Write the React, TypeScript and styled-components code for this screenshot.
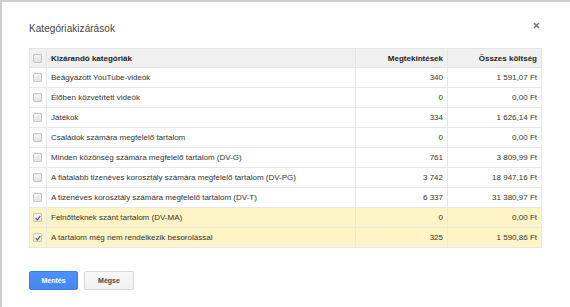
import React from 'react';
import styled, { createGlobalStyle } from 'styled-components';

const GlobalStyle = createGlobalStyle`
  html, body {
    margin: 0;
    padding: 0;
    background: #fff;
    overflow: hidden;
  }
  body {
    font-family: "Liberation Sans", Arial, sans-serif;
    color: #222;
  }
`;

type Row = { name: string; views: string; cost: string; checked?: boolean };

const rows: Row[] = [
  { name: 'Beágyazott YouTube-videók', views: '340', cost: '1 591,07 Ft' },
  { name: 'Élőben közvetített videók', views: '0', cost: '0,00 Ft' },
  { name: 'Játékok', views: '334', cost: '1 626,14 Ft' },
  { name: 'Családok számára megfelelő tartalom', views: '0', cost: '0,00 Ft' },
  { name: 'Minden közönség számára megfelelő tartalom (DV-G)', views: '761', cost: '3 809,99 Ft' },
  { name: 'A fiatalabb tizenéves korosztály számára megfelelő tartalom (DV-PG)', views: '3 742', cost: '18 947,16 Ft' },
  { name: 'A tizenéves korosztály számára megfelelő tartalom (DV-T)', views: '6 337', cost: '31 380,97 Ft' },
  { name: 'Felnőtteknek szánt tartalom (DV-MA)', views: '0', cost: '0,00 Ft', checked: true },
  { name: 'A tartalom még nem rendelkezik besorolással', views: '325', cost: '1 590,86 Ft', checked: true },
];

const Box = ({ checked }: { checked?: boolean }) => (
  <CheckBox>
    {checked && (
      <svg width="6" height="6" viewBox="0 0 6 6">
        <path d="M0.8 3.2 L2.4 4.8 L5.3 1" fill="none" stroke="#555" strokeWidth="1.2" />
      </svg>
    )}
  </CheckBox>
);

const App = () => {
  return (
    <>
      <GlobalStyle />
      <Dialog>
        <Header>
          <Title>Kategóriakizárások</Title>
          <Close aria-label="Bezárás">
            <svg width="7" height="7" viewBox="0 0 7 7">
              <path d="M1 1 L6 6 M6 1 L1 6" stroke="#777" strokeWidth="1.6" />
            </svg>
          </Close>
        </Header>

        <Table>
          <colgroup>
            <col style={{ width: 17 }} />
            <col style={{ width: 309 }} />
            <col style={{ width: 92 }} />
            <col style={{ width: 94 }} />
          </colgroup>
          <thead>
            <tr>
              <HeadCell>
                <Box />
              </HeadCell>
              <HeadCell>Kizárandó kategóriák</HeadCell>
              <HeadCell $right>Megtekintések</HeadCell>
              <HeadCell $right>Összes költség</HeadCell>
            </tr>
          </thead>
          <tbody>
            {rows.map((r) => (
              <BodyRow key={r.name} $selected={r.checked}>
                <Cell>
                  <Box checked={r.checked} />
                </Cell>
                <Cell>{r.name}</Cell>
                <Cell $right>{r.views}</Cell>
                <Cell $right>{r.cost}</Cell>
              </BodyRow>
            ))}
          </tbody>
        </Table>

        <Actions>
          <PrimaryButton>Mentés</PrimaryButton>
          <Button>Mégse</Button>
        </Actions>
      </Dialog>
    </>
  );
};

export default App;

const Dialog = styled.div`
  width: 100vw;
  height: 100vh;
  border: 2px solid #cfcfcf;
  border-right: none;
  border-bottom: none;
  padding: 19px 0 0 27px;
  box-sizing: border-box;
`;

const Header = styled.div`
  width: 512px;
  display: flex;
  align-items: center;
  justify-content: space-between;
  height: 14px;
`;

const Title = styled.div`
  font-size: 10px;
  color: #444;
  letter-spacing: 0.05px;
`;

const Close = styled.div`
  display: flex;
  align-items: center;
  padding-right: 1px;
  margin-top: -5px;
`;

const Table = styled.table`
  margin-top: 13px;
  width: 512px;
  table-layout: fixed;
  border-collapse: collapse;
  border: 1px solid #e5e5e5;
  font-size: 8px;
`;

const HeadCell = styled.th<{ $right?: boolean }>`
  height: 18px;
  padding: 0 4px;
  background: #f1f1f1;
  border: 1px solid #e5e5e5;
  font-weight: bold;
  color: #222;
  text-align: ${(p) => (p.$right ? 'right' : 'left')};
  white-space: nowrap;
  &:first-child {
    padding: 0 0 0 3px;
  }
`;

const BodyRow = styled.tr<{ $selected?: boolean }>`
  background: ${(p) => (p.$selected ? '#fff4c6' : '#fff')};
`;

const Cell = styled.td<{ $right?: boolean }>`
  height: 19px;
  padding: 0 4px;
  border: 1px solid #e8e8e8;
  color: #333;
  text-align: ${(p) => (p.$right ? 'right' : 'left')};
  white-space: nowrap;
  &:first-child {
    padding: 0 0 0 3px;
  }
`;

const CheckBox = styled.span`
  display: flex;
  align-items: center;
  justify-content: center;
  width: 7px;
  height: 7px;
  border: 1px solid #c4c4c4;
  border-radius: 1px;
  background: linear-gradient(#f4f4f4, #e2e2e2);
`;

const Actions = styled.div`
  display: flex;
  gap: 6px;
  margin-top: 23px;
`;

const Button = styled.button`
  width: 50px;
  height: 19px;
  padding: 0;
  font-family: "Liberation Sans", Arial, sans-serif;
  font-size: 7px;
  font-weight: bold;
  color: #444;
  background: linear-gradient(#f8f8f8, #f1f1f1);
  border: 1px solid #d9d9d9;
  border-radius: 2px;
`;

const PrimaryButton = styled(Button)`
  width: 49px;
  color: #fff;
  background: linear-gradient(#4d90fe, #4787ed);
  border-color: #3b7ce8;
`;
